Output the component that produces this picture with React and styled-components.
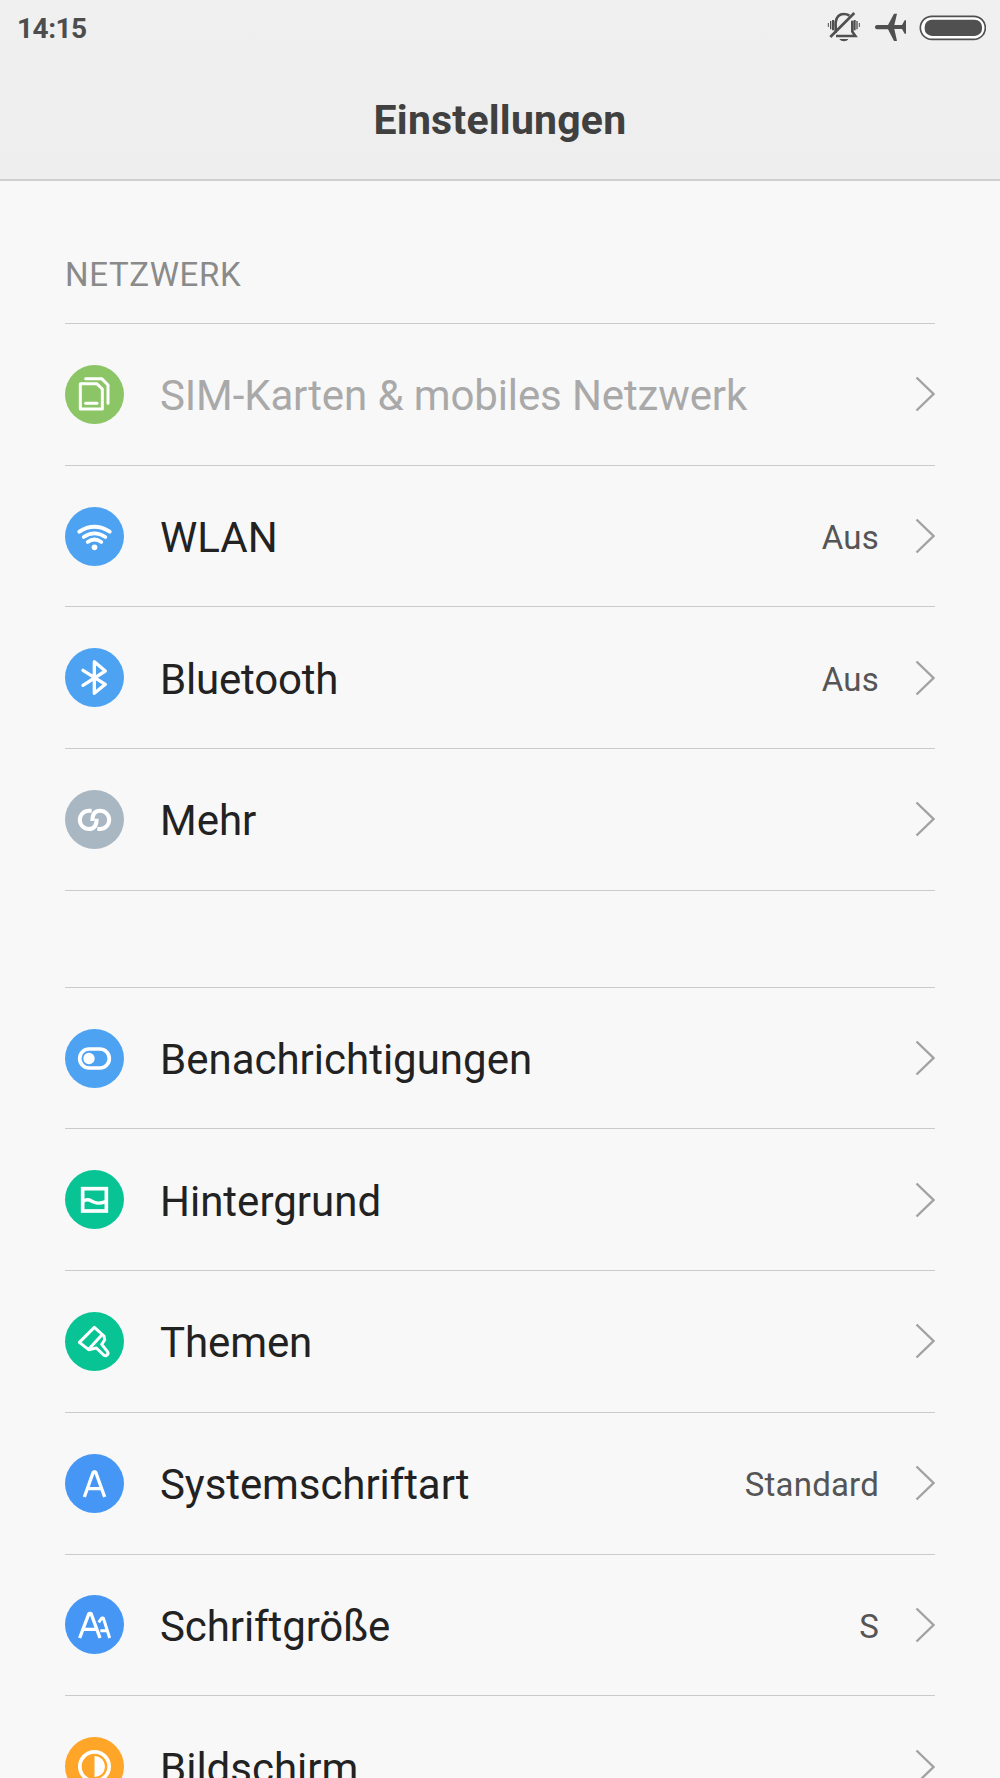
import React from "react";
import styled, { createGlobalStyle } from "styled-components";

const GlobalStyle = createGlobalStyle`
  html, body { margin: 0; padding: 0; background: #f8f8f8; }
  body { height: 1778px; overflow: hidden; }
`;

const Screen = styled.div`
  width: 1000px;
  height: 1778px;
  overflow: hidden;
  background: #f8f8f8;
  font-family: Roboto, "Liberation Sans", sans-serif;
`;

const Header = styled.header`
  display: flex;
  flex-direction: column;
  box-sizing: border-box;
  height: 181px;
  background: linear-gradient(#f0f0f0, #eeeeee);
  border-bottom: 2px solid #cfcfcf;
`;

const StatusBar = styled.div`
  display: flex;
  align-items: center;
  justify-content: space-between;
  height: 56px;
  padding: 0 14px 0 17px;
`;

const Clock = styled.span`
  padding-top: 2px;
  font-size: 28px;
  font-weight: 700;
  line-height: 54px;
  letter-spacing: -0.5px;
  color: #4d4d4d;
`;

const StatusIcons = styled.svg`
  display: block;
  width: 160px;
  height: 56px;
`;

const Title = styled.h1`
  margin: 0;
  padding-top: 40px;
  font-size: 41px;
  font-weight: 700;
  line-height: 48px;
  letter-spacing: 0.2px;
  text-align: center;
  color: #404040;
`;

const Content = styled.main`
  padding: 0 65px;
`;

const SectionTitle = styled.h2`
  box-sizing: border-box;
  height: 143px;
  margin: 0;
  padding-top: 74px;
  border-bottom: 1px solid #cbcbcb;
  font-size: 33px;
  font-weight: 400;
  line-height: 40px;
  letter-spacing: 0.65px;
  color: #8a8a8a;
`;

const Group = styled.section`
  margin-top: ${(p) => p.$gap || 0}px;
  border-top: ${(p) => (p.$gap ? "1px solid #cbcbcb" : "none")};
`;

const Row = styled.div`
  display: flex;
  align-items: center;
  box-sizing: border-box;
  height: 141.7px;
  border-bottom: 1px solid #cbcbcb;
`;

const RowIcon = styled.svg`
  flex: none;
  display: block;
  width: 59px;
  height: 59px;
  margin-right: 36px;
  border-radius: 50%;
  background: ${(p) => p.$color};
  fill: none;
  stroke: #fff;
  stroke-linecap: round;
  stroke-linejoin: round;
`;

const Label = styled.span`
  flex: 1;
  padding-top: 4px;
  font-size: 42px;
  line-height: 50px;
  letter-spacing: ${(p) => p.$spacing || 0}px;
  white-space: nowrap;
  color: ${(p) => (p.$muted ? "#a9a9a9" : "#222")};
`;

const Value = styled.span`
  padding-top: 4px;
  margin-right: 36px;
  font-size: 33px;
  line-height: 40px;
  letter-spacing: 0.2px;
  color: #555;
`;

const Arrow = styled.svg`
  flex: none;
  display: block;
  width: 20px;
  height: 36px;
  fill: none;
  stroke: #a2a2a2;
  stroke-width: 2.4;
`;

const icons = {
  sim: (
    <g strokeWidth="9">
      <path d="M46 56h49l17 16v60H46z" />
      <path d="M62 41h48l19 19v55" />
      <path d="M62 115h34" />
    </g>
  ),
  wifi: (
    <g strokeWidth="12">
      <path d="M43 74q45-29 91 0" />
      <path d="M56 90q32-22 65 0" strokeWidth="11" />
      <path d="M68 105q20-15 41 0" strokeWidth="11" />
      <circle cx="88.500" cy="121" r="8.500" fill="#fff" stroke="none" />
    </g>
  ),
  bluetooth: <path strokeWidth="10" d="M54 67l67 42-33 27V41l33 28-67 43" />,
  link: (
    <g strokeWidth="12" strokeLinecap="butt">
      <path d="M80 62H72a27.500 27.500 0 1 0 0 55c15 0 23-11 23-31" />
      <path d="M97 117h8a27.500 27.500 0 1 0 0-55c-15 0-23 11-23 31" />
    </g>
  ),
  toggle: (
    <g>
      <rect x="44" y="60" width="89" height="57" rx="28.500" strokeWidth="11" />
      <circle cx="72" cy="88.500" r="17" fill="#fff" stroke="none" />
    </g>
  ),
  wallpaper: (
    <g strokeLinecap="butt" strokeLinejoin="miter">
      <rect x="53" y="56" width="71" height="67" strokeWidth="11" />
      <path strokeWidth="10" d="M54 94c15-10 23-2 34 3s20 3 36-3" />
    </g>
  ),
  brush: (
    <g strokeWidth="9">
      <path d="M88 46L43 91l28 22 23-5 22 21c8 6 17-3 11-11l-17-21 9-13-2-12z" />
      <path d="M111 68l-40 44" />
    </g>
  ),
  contrast: (
    <g>
      <circle cx="88.500" cy="88.500" r="44" strokeWidth="11" />
      <path d="M88.500 57a31.500 31.500 0 0 1 0 63z" fill="#fff" stroke="none" />
    </g>
  ),
  font: (
    <g strokeWidth="10" strokeLinecap="butt" strokeLinejoin="bevel">
      <path d="M58 129L85 54h7l27 75M67 104h43" />
    </g>
  ),
  size: (
    <g strokeLinecap="butt" strokeLinejoin="bevel">
      <path strokeWidth="10" d="M44 129L72 55h6l27 74M54 103h41" />
      <path strokeWidth="9" d="M101 82l9-13h5l19 60M106 107h19" />
    </g>
  ),
};

const network = [
  { icon: "sim", color: "#8bc566", label: "SIM-Karten & mobiles Netzwerk", muted: true, spacing: -0.12 },
  { icon: "wifi", color: "#4da3f2", label: "WLAN", value: "Aus" },
  { icon: "bluetooth", color: "#4da3f2", label: "Bluetooth", value: "Aus", spacing: -0.18 },
  { icon: "link", color: "#a9b7c2", label: "Mehr" },
];

const personal = [
  { icon: "toggle", color: "#4da3f2", label: "Benachrichtigungen" },
  { icon: "wallpaper", color: "#08c495", label: "Hintergrund" },
  { icon: "brush", color: "#08c495", label: "Themen", spacing: -0.1 },
  { icon: "font", color: "#4696f5", label: "Systemschriftart", value: "Standard", spacing: -0.08 },
  { icon: "size", color: "#4696f5", label: "Schriftgröße", value: "S", spacing: -0.1 },
  { icon: "contrast", color: "#ffa527", label: "Bildschirm" },
];

function SettingsRow({ icon, color, label, value, muted, spacing }) {
  return (
    <Row>
      <RowIcon $color={color} viewBox="0 0 177 177">{icons[icon]}</RowIcon>
      <Label $muted={muted} $spacing={spacing}>{label}</Label>
      {value && <Value>{value}</Value>}
      <Arrow viewBox="0 0 20 36"><path d="M1.500 1.500L18.500 18L1.500 34.500" /></Arrow>
    </Row>
  );
}

export default function App() {
  return (
    <Screen>
      <GlobalStyle />
      <Header>
        <StatusBar>
          <Clock>14:15</Clock>
          <StatusIcons viewBox="78 0 480 168">
            <g fill="none" stroke="#505050" strokeWidth="8">
              <path d="M107 98c1-10-1-22 0-32 3-17 13-24 24-24 8 0 13 2 17 5" />
              <path d="M157 62v33l9 13h-58" />
              <path d="M91 111L163 39" />
              <path d="M99 60v31M164 60v31" strokeWidth="6" />
              <path d="M92 63v25M171 63v25" strokeWidth="4" />
              <path d="M85 69v12M178 69v12" strokeWidth="3" />
            </g>
            <path fill="#505050" d="M118 117h27c-5 9-21 9-27 0z" />
            <path fill="#505050" d="M231 75h33l18-34h9l-8 34h23l8-14h4v40h-4l-8-14h-23l8 36h-9l-18-35h-33c-8-2-8-11 0-13z" />
            <rect x="361" y="49" width="195" height="69" rx="34.500" fill="#fff" stroke="#505050" strokeWidth="5" />
            <rect x="374" y="59" width="172" height="49" rx="22" fill="#505050" />
          </StatusIcons>
        </StatusBar>
        <Title>Einstellungen</Title>
      </Header>
      <Content>
        <SectionTitle>NETZWERK</SectionTitle>
        <Group>
          {network.map((item) => <SettingsRow key={item.label} {...item} />)}
        </Group>
        <Group $gap={96}>
          {personal.map((item) => <SettingsRow key={item.label} {...item} />)}
        </Group>
      </Content>
    </Screen>
  );
}
